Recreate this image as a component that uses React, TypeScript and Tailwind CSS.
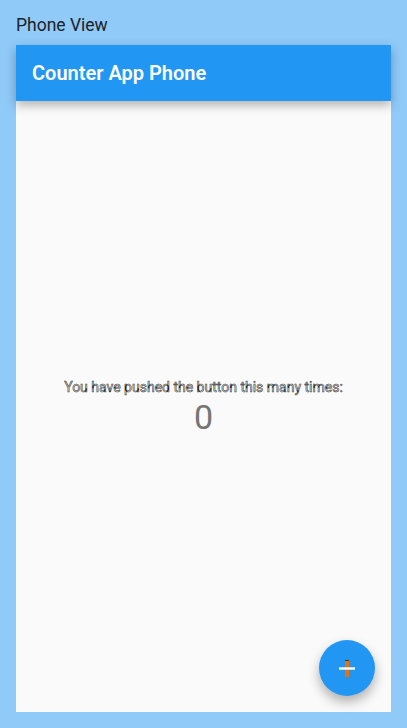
import React, { useState } from 'react'

export default function App() {
  const [count, setCount] = useState(0)

  return (
    <div className="min-h-[728px] bg-[#90caf9] px-4 pb-4 flex flex-col font-['Roboto',sans-serif]">
      {/* Header label */}
      <div className="pt-[12px] pb-[7px] text-[17.5px] leading-[26px] text-[#1c2228]">Phone View</div>

      {/* Phone frame */}
      <div className="relative flex-1 flex flex-col bg-[#fafafa]">
        <div className="h-14 shrink-0 bg-[#2196f3] flex items-center px-4 shadow-[0_4px_10px_rgba(0,0,0,0.3)] z-10">
          <h1 className="text-white text-xl font-semibold">Counter App Phone</h1>
        </div>

        <div className="flex-1 flex flex-col items-center justify-center">
          <p className="text-sm leading-5 text-white [-webkit-text-stroke:0.6px_rgba(0,0,0,0.85)]">
            You have pushed the button this many times:
          </p>
          <p className="text-[34px] leading-10 text-[#757575]">{count}</p>
        </div>

        {/* FAB */}
        <button
          onClick={() => setCount(count + 1)}
          className="absolute right-4 bottom-4 w-14 h-14 rounded-full bg-[#2196f3] flex items-center justify-center shadow-[0_6px_12px_rgba(0,0,0,0.3)]"
        >
          <svg width="16" height="17" viewBox="0 0 16 17">
            <rect x="6" y="0" width="4" height="17" fill="#e8710a" />
            <rect x="6" y="0" width="4" height="1" fill="#5a3000" />
            <rect x="0" y="7.3" width="16" height="2.4" fill="#ffffff" />
          </svg>
        </button>
      </div>
    </div>
  )
}
